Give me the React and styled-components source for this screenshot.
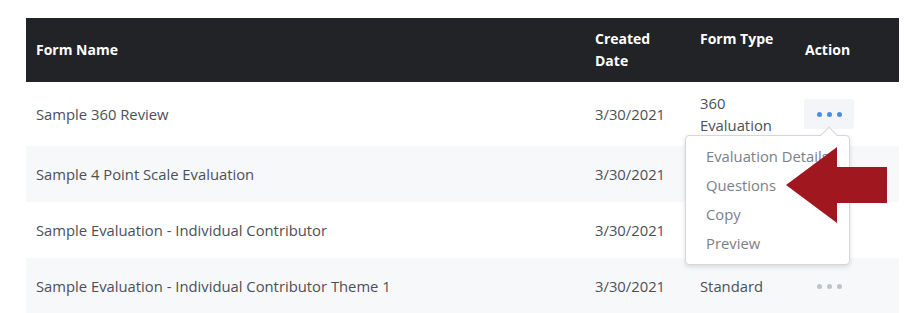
import styled, { createGlobalStyle } from 'styled-components'

const GlobalStyle = createGlobalStyle`
  body {
    margin: 0;
    background: #fff;
    font-family: "Open Sans", Lato, sans-serif;
  }
`

const forms = [
  { name: 'Sample 360 Review', date: '3/30/2021', type: '360 Evaluation', active: true },
  { name: 'Sample 4 Point Scale Evaluation', date: '3/30/2021', type: '' },
  { name: 'Sample Evaluation - Individual Contributor', date: '3/30/2021', type: '' },
  { name: 'Sample Evaluation - Individual Contributor Theme 1', date: '3/30/2021', type: 'Standard', dots: true },
]

const menuItems = ['Evaluation Details', 'Questions', 'Copy', 'Preview']

export default function App() {
  return (
    <>
      <GlobalStyle />
      <Page>
        <Table>
          <colgroup>
            <col style={{ width: 559 }} />
            <col style={{ width: 105 }} />
            <col style={{ width: 105 }} />
            <col style={{ width: 104 }} />
          </colgroup>
          <thead>
            <tr>
              <Th>Form Name</Th>
              <Th>Created Date</Th>
              <Th $top>Form Type</Th>
              <Th>Action</Th>
            </tr>
          </thead>
          <tbody>
            {forms.map((f, i) => (
              <Row key={i} $striped={i % 2 === 1}>
                <Td $tall={f.active}>{f.name}</Td>
                <Td $tall={f.active}>{f.date}</Td>
                <Td $tall={f.active}>{f.type === '360 Evaluation' ? <>360<br />Evaluation</> : f.type}</Td>
                <Td $tall={f.active}>
                  {f.active && (
                    <ActionWrap>
                      <DotsButton $active>
                        <Dot $active /><Dot $active /><Dot $active />
                      </DotsButton>
                      <Menu>
                        {menuItems.map((m) => (
                          <MenuItem key={m}>{m}</MenuItem>
                        ))}
                      </Menu>
                    </ActionWrap>
                  )}
                  {f.dots && (
                    <DotsButton>
                      <Dot /><Dot /><Dot />
                    </DotsButton>
                  )}
                </Td>
              </Row>
            ))}
          </tbody>
        </Table>
        <Pointer viewBox="0 0 101 76" width="101" height="76">
          <polygon points="0,38 51,0 51,20 101,20 101,56 51,56 51,76" fill="#a0171f" />
        </Pointer>
      </Page>
    </>
  )
}

const Page = styled.div`
  position: relative;
  padding: 18px 19px 0 26px;
  height: 313px;
  box-sizing: border-box;
  overflow: hidden;
`

const Table = styled.table`
  width: 873px;
  border-collapse: collapse;
  table-layout: fixed;
  font-size: 14.8px;
`

const Th = styled.th`
  background: #212327;
  color: #fff;
  font-size: 14px;
  font-weight: 700;
  text-align: left;
  line-height: 22px;
  padding: 10px 10px;
  height: 44px;
  vertical-align: ${({ $top }) => ($top ? 'top' : 'middle')};
`

const Row = styled.tr`
  background: ${({ $striped }) => ($striped ? '#f7f8fa' : '#fff')};
`

const Td = styled.td`
  color: #4b5058;
  line-height: 22px;
  padding: ${({ $tall }) => ($tall ? '10px' : '17px')} 10px;
  vertical-align: middle;
`

const ActionWrap = styled.div`
  position: relative;
  width: 50px;
`

const DotsButton = styled.div`
  display: flex;
  align-items: center;
  justify-content: center;
  gap: 5px;
  width: 50px;
  height: ${({ $active }) => ($active ? '30px' : '22px')};
  margin-left: -1px;
  border-radius: 3px;
  background: ${({ $active }) => ($active ? '#f3f5f8' : 'transparent')};
`

const Dot = styled.span`
  width: 5px;
  height: 5px;
  border-radius: 50%;
  background: ${({ $active }) => ($active ? '#4a8fe7' : '#bcc3ca')};
`

const Menu = styled.div`
  position: absolute;
  top: 36px;
  left: -120px;
  width: 163px;
  padding: 6px 0;
  background: #fff;
  border: 1px solid #d3d6da;
  border-radius: 4px;
  box-shadow: 0 2px 5px rgba(0, 0, 0, 0.12);
  z-index: 2;

  &::before {
    content: '';
    position: absolute;
    top: -7px;
    left: 137px;
    width: 11px;
    height: 11px;
    background: #fff;
    border-left: 1px solid #d3d6da;
    border-top: 1px solid #d3d6da;
    transform: rotate(45deg);
  }
`

const MenuItem = styled.div`
  padding: 0 20px;
  line-height: 29px;
  color: #7b8089;
  white-space: nowrap;
  overflow: hidden;
`

const Pointer = styled.svg`
  position: absolute;
  left: 786px;
  top: 147px;
  z-index: 3;
`
